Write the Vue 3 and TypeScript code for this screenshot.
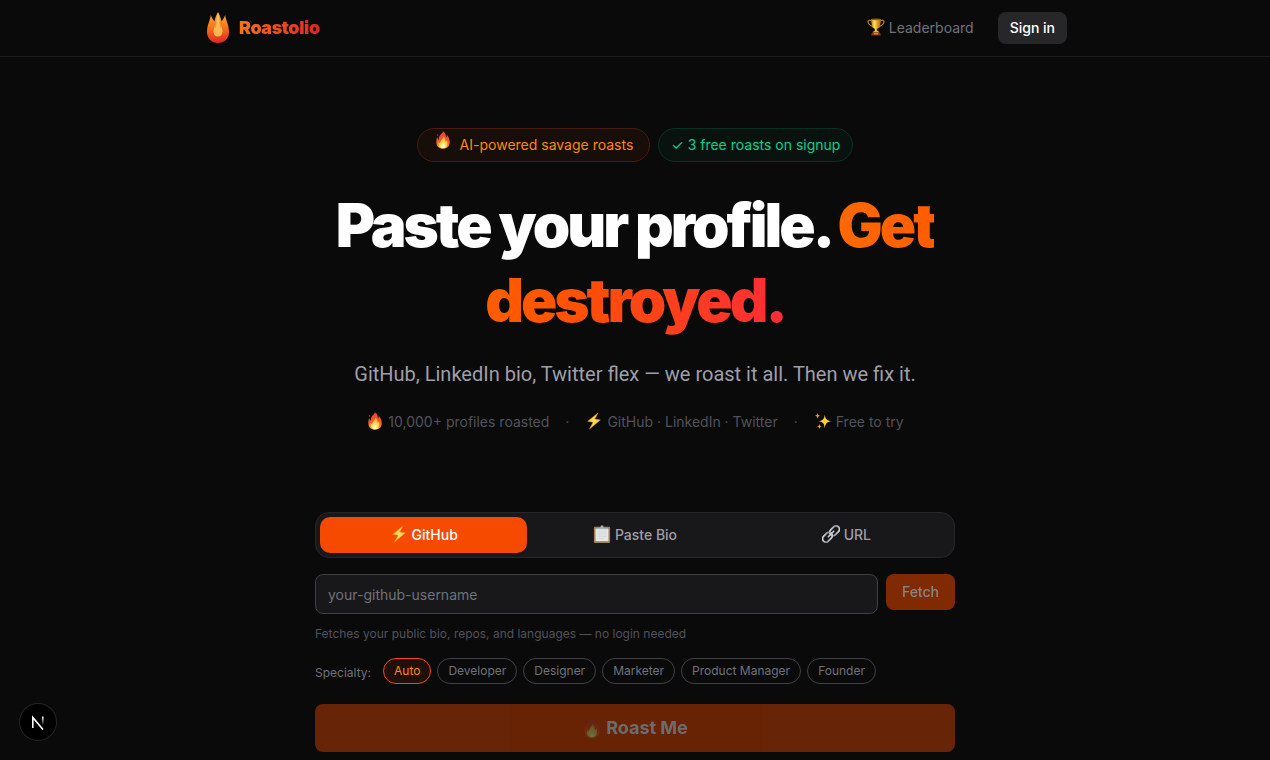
<script setup lang="ts">
import { ref } from 'vue'

interface Tab {
  label: string
  icon: string
}

const tabs: Tab[] = [
  { label: 'GitHub', icon: 'bolt' },
  { label: 'Paste Bio', icon: 'clipboard' },
  { label: 'URL', icon: 'link' },
]
const stats: Tab[] = [
  { label: '10,000+ profiles roasted', icon: 'fire' },
  { label: 'GitHub · LinkedIn · Twitter', icon: 'bolt' },
  { label: 'Free to try', icon: 'sparkles' },
]
const specialties = ['Auto', 'Developer', 'Designer', 'Marketer', 'Product Manager', 'Founder']

const activeTab = ref('GitHub')
const specialty = ref('Auto')
const username = ref('')
</script>

<template>
  <div class="page">
    <svg class="sprite" aria-hidden="true">
      <defs>
        <linearGradient id="g-logo" x1="0" y1="0" x2="0" y2="1">
          <stop offset="0" stop-color="#fbb040" />
          <stop offset="0.5" stop-color="#f97316" />
          <stop offset="1" stop-color="#dc2626" />
        </linearGradient>
        <linearGradient id="g-logo-in" x1="0" y1="0" x2="0" y2="1">
          <stop offset="0" stop-color="#fcd270" />
          <stop offset="1" stop-color="#fbb14a" />
        </linearGradient>
        <linearGradient id="g-fire" x1="0" y1="0" x2="0" y2="1">
          <stop offset="0" stop-color="#e8432c" />
          <stop offset="0.6" stop-color="#fa5a2b" />
          <stop offset="1" stop-color="#ff9a2c" />
        </linearGradient>
        <radialGradient id="g-fire-in" cx="0.5" cy="0.85" r="0.8">
          <stop offset="0" stop-color="#fffde0" />
          <stop offset="0.4" stop-color="#ffe75a" />
          <stop offset="1" stop-color="#ff9a30" />
        </radialGradient>
        <linearGradient id="g-bolt" x1="0" y1="0" x2="1" y2="1">
          <stop offset="0" stop-color="#f8a51b" />
          <stop offset="0.5" stop-color="#ffe16a" />
          <stop offset="1" stop-color="#f6a01a" />
        </linearGradient>
        <linearGradient id="g-cup" x1="0" y1="0" x2="1" y2="0">
          <stop offset="0" stop-color="#b87908" />
          <stop offset="0.35" stop-color="#ffe06a" />
          <stop offset="0.6" stop-color="#e5a51a" />
          <stop offset="1" stop-color="#a96505" />
        </linearGradient>
        <linearGradient id="g-link" x1="0" y1="0" x2="1" y2="1">
          <stop offset="0" stop-color="#e3e8ea" />
          <stop offset="0.5" stop-color="#87929a" />
          <stop offset="1" stop-color="#dce2e5" />
        </linearGradient>
        <linearGradient id="g-n" x1="0" y1="0" x2="0" y2="1">
          <stop offset="0" stop-color="#fff" />
          <stop offset="1" stop-color="#fff" stop-opacity="0" />
        </linearGradient>
      </defs>
      <symbol id="logo" viewBox="0 0 30 34">
        <path fill="url(#g-logo)" d="M15 1c1.500 3 3 6 3.600 9.500C19.800 8.500 21.500 6.500 22.200 4c.5 5 3.800 10 3.800 17 0 6.500-4.500 11-11 11S4 27.500 4 21C4 14 7.300 9 7.800 4c.7 2.500 2.400 4.500 3.600 6.500C12 7 13.500 4 15 1z" />
        <path fill="url(#g-logo-in)" d="M15 2c-1 4-1.500 8-1.800 11-1.600 2-2.700 5-2.700 7.500 0 3 1.800 5 4.500 5s4.500-2 4.500-5c0-2.500-1.100-5.500-2.700-7.500C16.500 10 16 6 15 2z" />
        <path fill="none" stroke="#f28a25" stroke-width=".7" d="M13.300 11l-1 6M16.700 11l1 6" />
      </symbol>
      <symbol id="fire" viewBox="0 0 16 20">
        <path fill="url(#g-fire)" d="M7.800.4c2.400 1.300 3.600 3.800 3.500 6.800.7-.6 1-1.700.9-2.900 2.300 2.400 3.400 5.500 3.300 8.600-.2 4.300-3.200 6.800-7.400 6.800-4.400 0-7.200-2.600-7.500-7-.1-2.500.3-4.500 1.200-6 .2 1.400.7 2.500 1.600 3C3.100 6.500 4.300 4.700 6 3.300 7 2.500 7.700 1.500 7.800.4z" />
        <circle cx="2" cy="4.500" r=".9" fill="#c93424" />
        <path fill="url(#g-fire-in)" d="M8.300 6c1.900 1.500 2.700 3.600 2.500 6 .8-.4 1.300-1.100 1.500-2 1.800 5.100-.2 9.300-4.200 9.300-3.900 0-5.800-3.100-4.900-7.300.4.900.9 1.400 1.600 1.500-.1-2.700 3.200-4.500 3.500-7.500z" />
      </symbol>
      <symbol id="bolt" viewBox="0 0 20 20">
        <path fill="url(#g-bolt)" stroke="#e9951b" stroke-width=".6" stroke-linejoin="round" d="M14.500 1L3 10.300l6 1.100L5 19 17 8.800l-6.200-1L14.500 1z" />
      </symbol>
      <symbol id="sparkles" viewBox="0 0 20 20">
        <path fill="#ffcf3c" d="M12 3c.8 5 1.800 6.300 7.500 7.200C13.800 11 12.800 12.500 12 18c-.8-5.500-1.800-7-7-7.800C10.200 9.300 11.200 8 12 3z" />
        <path fill="#f6a91f" d="M4 1c.4 2.200.9 2.800 3.200 3.200C4.900 4.600 4.400 5.200 4 7.500 3.600 5.200 3.100 4.600.8 4.200 3.100 3.800 3.600 3.200 4 1zM6 13c.4 2.100.8 2.600 2.800 3-2 .4-2.400.9-2.800 3-.4-2.100-.8-2.600-2.800-3 2-.4 2.400-.9 2.800-3z" />
      </symbol>
      <symbol id="trophy" viewBox="0 0 20 20">
        <path fill="none" stroke="#c98a16" stroke-width="1.300" d="M5.500 3.500C2.500 1.500.8 3 1.200 5c.5 2.800 4 3 6.300 6M14.500 3.500c3-2 4.700-.5 4.300 1.500-.5 2.800-4 3-6.300 6" />
        <path fill="url(#g-cup)" d="M4.500 1.200h11c0 5.500-1.200 9.300-4.300 11v3.300H8.800v-3.300C5.700 10.500 4.500 6.700 4.500 1.200z" />
        <ellipse cx="10" cy="1.500" rx="5.500" ry="1" fill="#9b5d09" />
        <path fill="#e4b03a" d="M7.500 14.200h5l1 2.300h-7z" />
        <path fill="#8f2d12" d="M5.500 16h9l1 3.500h-11z" />
        <path fill="#e8b33c" d="M7.500 17h5v1.200h-5z" />
      </symbol>
      <symbol id="clipboard" viewBox="0 0 20 20">
        <rect x="1" y="2" width="18" height="18" rx="1" fill="#a18250" />
        <rect x="2.800" y="4" width="14.400" height="14" fill="#e4e6e8" />
        <path stroke="#cfd3d6" stroke-width=".8" d="M5 7.500h10M5 10h10M5 12.500h10M5 15h7" />
        <path fill="#a7b0b8" d="M4.500 4.800V3h3.700C8.300 1 9 .3 10 .3s1.700.7 1.800 2.700h3.700v1.800z" />
      </symbol>
      <symbol id="link" viewBox="0 0 20 20">
        <g fill="none" stroke="url(#g-link)" stroke-width="2">
          <rect x="8" y="2.700" width="12" height="7.400" rx="3.700" transform="rotate(-45 14 6.400)" />
          <rect x="0" y="9.900" width="12" height="7.400" rx="3.700" transform="rotate(-45 6 13.600)" />
        </g>
        <path stroke="#c9d0d4" stroke-width="1.800" stroke-linecap="round" d="M7 13l6-6" />
      </symbol>
    </svg>

    <header class="header">
      <nav class="nav">
        <a class="brand" href="#">
          <svg class="brand-icon" aria-hidden="true"><use href="#logo" /></svg>
          <span class="brand-name">Roastolio</span>
        </a>
        <div class="nav-links">
          <a class="leader" href="#leaderboard">
            <svg class="emoji raised" aria-hidden="true"><use href="#trophy" /></svg>Leaderboard
          </a>
          <button class="signin" type="button">Sign in</button>
        </div>
      </nav>
    </header>

    <main class="main">
      <section class="hero">
        <div class="badges">
          <span class="badge badge-fire">
            <svg class="emoji" aria-hidden="true"><use href="#fire" /></svg>AI-powered savage roasts
          </span>
          <span class="badge badge-free">✓ 3 free roasts on signup</span>
        </div>
        <h1>Paste your profile. <span class="hot">Get destroyed.</span></h1>
        <p class="lead">GitHub, LinkedIn bio, Twitter flex — we roast it all. Then we fix it.</p>
        <div class="stats">
          <template v-for="(s, i) in stats" :key="s.label">
            <span v-if="i > 0">·</span>
            <span class="stat">
              <svg class="emoji raised" aria-hidden="true"><use :href="'#' + s.icon" /></svg>{{ s.label }}
            </span>
          </template>
        </div>
      </section>

      <form class="form" @submit.prevent>
        <div class="tabs">
          <button
            v-for="t in tabs"
            :key="t.label"
            type="button"
            class="tab"
            :class="{ active: t.label === activeTab }"
            @click="activeTab = t.label"
          >
            <svg class="emoji raised" aria-hidden="true"><use :href="'#' + t.icon" /></svg>{{ t.label }}
          </button>
        </div>

        <div class="fetch-block">
          <div class="row">
            <input
              id="username"
              v-model="username"
              class="input"
              type="text"
              aria-label="GitHub username"
              placeholder="your-github-username"
            />
            <button class="fetch" type="button" :disabled="!username">Fetch</button>
          </div>
          <label class="help" for="username">Fetches your public bio, repos, and languages — no login needed</label>
        </div>

        <div class="chips">
          <span class="chips-label">Specialty:</span>
          <button
            v-for="s in specialties"
            :key="s"
            type="button"
            class="chip"
            :class="{ active: s === specialty }"
            @click="specialty = s"
          >
            {{ s }}
          </button>
        </div>

        <button class="roast" type="submit" :disabled="!username">
          <svg class="roast-icon" aria-hidden="true"><use href="#fire" /></svg>Roast Me
        </button>
      </form>
    </main>

    <button class="dev" type="button" aria-label="Open developer tools">
      <svg viewBox="0 0 36 36" width="36" height="36" aria-hidden="true">
        <path fill="none" stroke="#fff" stroke-width="1.600" d="M12.800 24V13.500L23 25.500" />
        <rect x="22" y="12.500" width="1.600" height="9" fill="url(#g-n)" />
      </svg>
    </button>
  </div>
</template>

<style>
body {
  margin: 0;
  background: #0a0a0a;
}
</style>

<style scoped>
.page {
  min-height: 100vh;
  background: #0a0a0a;
  color: #fff;
  font-family: Inter, "Liberation Sans", sans-serif;
  font-size: 14px;
  line-height: 20px;
}
* {
  box-sizing: border-box;
}
button,
input {
  font: inherit;
  margin: 0;
}
button {
  border: 0;
  cursor: pointer;
}
a {
  text-decoration: none;
}
.sprite {
  position: absolute;
  width: 0;
  height: 0;
}
.emoji {
  width: 18px;
  height: 18px;
  flex: none;
}
.raised {
  margin-bottom: 2px;
}
.header {
  border-bottom: 1px solid #1d1d1f;
}
.nav {
  max-width: 896px;
  height: 56px;
  margin: 0 auto;
  padding: 0 16px;
  display: flex;
  align-items: center;
  justify-content: space-between;
}
.brand {
  display: flex;
  align-items: center;
  gap: 6px;
}
.brand-icon {
  width: 30px;
  height: 34px;
}
.brand-name {
  font-size: 18px;
  line-height: 28px;
  font-weight: 900;
  letter-spacing: -0.025em;
  color: transparent;
  background: linear-gradient(90deg, #f97316, #dc2626);
  -webkit-background-clip: text;
  background-clip: text;
}
.nav-links {
  display: flex;
  align-items: center;
  gap: 24px;
}
.leader {
  display: flex;
  align-items: center;
  gap: 4px;
  color: #71717b;
}
.signin {
  height: 32px;
  padding: 0 12px;
  border-radius: 8px;
  background: #27272a;
  color: #fff;
  font-weight: 500;
}
.main {
  padding: 71px 16px 8px;
}
.hero {
  max-width: 640px;
  margin: 0 auto;
  text-align: center;
}
.badges {
  display: flex;
  flex-wrap: wrap;
  justify-content: center;
  gap: 8px;
}
.badge {
  display: flex;
  align-items: center;
  height: 34px;
  border: 1px solid;
  border-radius: 17px;
}
.badge-fire {
  gap: 8px;
  padding: 0 16px;
  color: #ff8904;
  background: #170d09;
  border-color: #4a1c0b;
}
.badge-fire .emoji {
  margin-bottom: 10px;
}
.badge-free {
  padding: 0 12px;
  color: #00d492;
  background: #09120f;
  border-color: #073325;
}
h1 {
  margin: 26px 0 0;
  font-size: 60px;
  line-height: 75px;
  font-weight: 900;
  letter-spacing: -0.05em;
}
.hot {
  color: transparent;
  background: linear-gradient(90deg, #ff6900, #ff5500 40%, #fb2c36);
  -webkit-background-clip: text;
  background-clip: text;
}
.lead {
  margin: 22px 0 0;
  font-family: Roboto, Inter, sans-serif;
  font-size: 20px;
  line-height: 28px;
  color: #9f9fa9;
}
.stats {
  display: flex;
  flex-wrap: wrap;
  justify-content: center;
  gap: 16px;
  margin-top: 24px;
  color: #52525c;
}
.stat {
  display: flex;
  align-items: center;
  gap: 4px;
}
.form {
  max-width: 640px;
  margin: 80px auto 0;
  display: flex;
  flex-direction: column;
  gap: 16px;
}
.tabs {
  display: grid;
  grid-template-columns: repeat(3, 1fr);
  gap: 4px;
  padding: 4px;
  background: #18181b;
  border: 1px solid #27272a;
  border-radius: 14px;
}
.tab {
  display: flex;
  align-items: center;
  justify-content: center;
  gap: 4px;
  height: 36px;
  padding: 0 16px;
  border-radius: 10px;
  background: transparent;
  color: #9f9fa9;
  font-weight: 500;
}
.tab.active {
  background: #f54a00;
  color: #fff;
}
.fetch-block {
  display: flex;
  flex-direction: column;
  gap: 12px;
}
.row {
  display: flex;
  align-items: flex-start;
  gap: 8px;
}
.input {
  flex: 1;
  min-width: 0;
  height: 40px;
  padding: 0 12px;
  border: 1px solid #3f3f46;
  border-radius: 8px;
  background: #18181b;
  color: #fff;
  outline: none;
}
.input::placeholder {
  color: #71717b;
  opacity: 1;
}
.fetch {
  height: 36px;
  padding: 0 16px;
  border-radius: 8px;
  background: #f54a00;
  color: #fff;
  font-weight: 500;
}
.fetch:disabled {
  opacity: 0.5;
}
.help {
  font-size: 12px;
  line-height: 16px;
  color: #52525c;
}
.chips {
  display: flex;
  flex-wrap: wrap;
  gap: 6px;
  font-size: 12px;
  line-height: 16px;
  color: #71717b;
}
.chips-label {
  padding-top: 7px;
  margin-right: 6px;
}
.chip {
  height: 26px;
  padding: 0 10px;
  border: 1px solid #3f3f46;
  border-radius: 13px;
  background: transparent;
  color: #71717b;
}
.chip.active {
  color: #ff8904;
  border-color: #f54a00;
  background: #210f09;
}
.roast {
  display: flex;
  align-items: center;
  justify-content: center;
  gap: 4px;
  height: 48px;
  margin-top: 4px;
  border-radius: 8px;
  background: #f54a00;
  color: #fff;
  font-size: 18px;
  line-height: 28px;
  font-weight: 700;
}
.roast:disabled {
  opacity: 0.4;
}
.roast-icon {
  width: 20px;
  height: 20px;
}
.dev {
  position: fixed;
  left: 20px;
  bottom: 20px;
  width: 36px;
  height: 36px;
  padding: 0;
  border-radius: 50%;
  background: #000;
  box-shadow: 0 0 0 1px #262626;
}
.dev svg {
  display: block;
}
</style>
